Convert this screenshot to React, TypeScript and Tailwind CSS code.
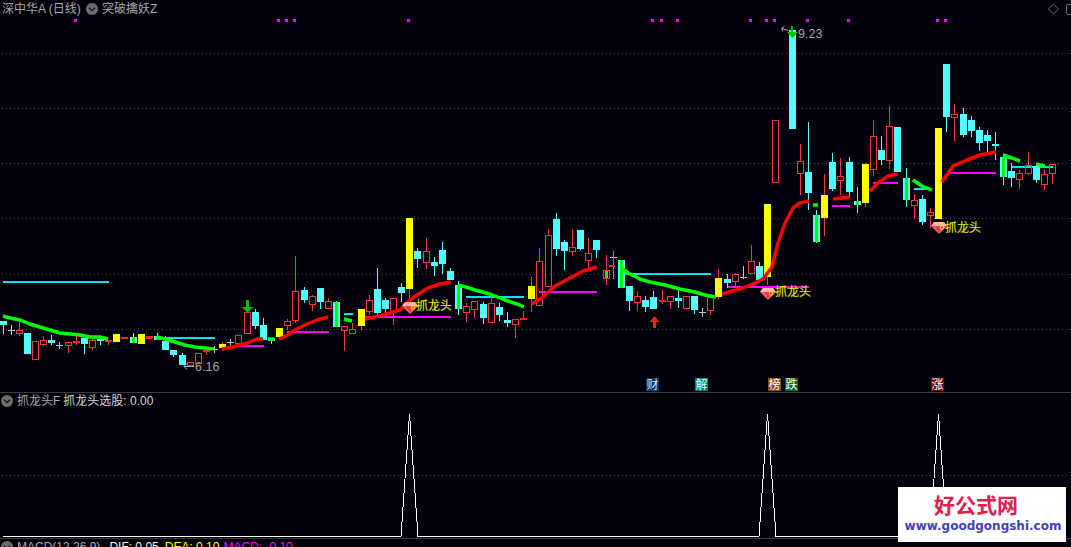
type Kind = 'r' | 'c' | 'y' | 'w' | 'f' | 'cg' | 'rg';
type Candle = [number, number, number, number, number, Kind];

// x, wick top, body top, body bottom, wick bottom, kind
const candles: Candle[] = [
  [3, 321, 321, 325, 334, 'c'], [11, 325, 330, 330, 335, 'w'], [19, 322, 330, 333, 336, 'r'], [27, 333, 333, 354, 354, 'c'],
  [35, 341, 341, 359, 359, 'r'], [43, 336, 340, 344, 346, 'r'], [51, 335, 340, 343, 345, 'c'], [59, 342, 345, 345, 349, 'w'],
  [68, 342, 342, 345, 353, 'r'], [76, 336, 341, 343, 345, 'f'], [84, 338, 338, 344, 354, 'c'], [92, 339, 340, 347, 350, 'r'],
  [100, 339, 339, 341, 345, 'c'], [108, 340, 340, 341, 345, 'f'], [116, 334, 334, 342, 342, 'y'], [124, 337, 337, 339, 339, 'f'],
  [133, 333, 337, 343, 343, 'cg'], [141, 334, 334, 344, 344, 'y'], [149, 336, 336, 339, 339, 'f'], [157, 333, 336, 340, 340, 'cg'],
  [165, 336, 341, 350, 350, 'c'], [173, 350, 350, 355, 357, 'c'], [182, 353, 355, 365, 365, 'c'], [190, 362, 362, 365, 365, 'r'],
  [198, 353, 353, 363, 363, 'r'], [206, 350, 350, 352, 355, 'f'], [214, 346, 349, 349, 353, 'w'], [222, 342, 344, 348, 351, 'y'],
  [230, 339, 342, 342, 347, 'w'], [238, 335, 335, 343, 343, 'r'], [247, 312, 312, 333, 333, 'r'], [255, 309, 312, 326, 329, 'c'],
  [263, 318, 325, 340, 340, 'c'], [271, 338, 338, 341, 344, 'cg'], [279, 328, 328, 337, 337, 'y'], [287, 319, 321, 325, 330, 'r'],
  [295, 256, 291, 320, 323, 'r'], [304, 287, 290, 300, 303, 'c'], [312, 295, 296, 304, 311, 'r'], [320, 288, 288, 302, 309, 'c'],
  [328, 298, 301, 308, 309, 'r'], [336, 301, 302, 327, 327, 'cg'], [344, 326, 326, 330, 351, 'r'], [352, 323, 329, 333, 333, 'r'],
  [361, 309, 309, 326, 330, 'y'], [369, 295, 300, 311, 315, 'r'], [377, 268, 289, 313, 315, 'c'], [385, 298, 300, 309, 313, 'c'],
  [393, 298, 298, 311, 325, 'r'], [401, 283, 287, 293, 302, 'c'], [409, 218, 218, 289, 298, 'y'], [417, 248, 251, 259, 268, 'c'],
  [426, 238, 251, 262, 269, 'r'], [434, 257, 262, 266, 276, 'c'], [442, 242, 250, 264, 274, 'c'], [450, 268, 271, 280, 280, 'c'],
  [458, 281, 285, 309, 315, 'cg'], [466, 303, 306, 312, 322, 'r'], [474, 301, 301, 309, 318, 'r'], [483, 302, 304, 318, 324, 'c'],
  [491, 297, 303, 322, 322, 'r'], [499, 303, 307, 315, 321, 'c'], [507, 312, 320, 323, 327, 'c'], [515, 319, 319, 324, 338, 'r'],
  [523, 311, 318, 320, 320, 'f'], [531, 277, 286, 299, 312, 'y'], [539, 248, 261, 305, 305, 'r'], [548, 229, 235, 286, 287, 'r'],
  [556, 213, 219, 249, 256, 'c'], [564, 240, 242, 251, 270, 'c'], [572, 229, 247, 251, 256, 'r'], [580, 230, 230, 249, 250, 'c'],
  [588, 238, 253, 260, 268, 'r'], [596, 240, 240, 250, 258, 'c'], [606, 255, 270, 278, 285, 'rg'], [621, 260, 260, 288, 288, 'cg'],
  [629, 286, 286, 301, 311, 'c'], [637, 291, 296, 302, 311, 'r'], [645, 296, 300, 307, 312, 'c'], [653, 291, 297, 309, 309, 'c'],
  [662, 290, 300, 302, 304, 'f'], [670, 296, 296, 301, 309, 'r'], [678, 291, 298, 301, 308, 'c'], [686, 296, 296, 308, 310, 'r'],
  [694, 296, 296, 310, 314, 'c'], [702, 308, 312, 312, 317, 'w'], [710, 297, 297, 310, 315, 'r'], [718, 269, 278, 297, 299, 'y'],
  [727, 274, 279, 283, 288, 'c'], [735, 273, 274, 281, 288, 'r'], [743, 266, 277, 277, 279, 'w'], [751, 245, 261, 273, 274, 'r'],
  [759, 262, 266, 280, 280, 'c'], [767, 204, 204, 277, 285, 'y'], [775, 120, 120, 182, 183, 'r'], [792, 30, 30, 129, 129, 'c'],
  [800, 144, 161, 173, 195, 'r'], [808, 122, 172, 193, 210, 'c'], [816, 210, 215, 242, 243, 'cg'], [824, 174, 195, 218, 236, 'y'],
  [832, 153, 162, 189, 191, 'c'], [840, 158, 176, 180, 195, 'r'], [849, 157, 162, 192, 197, 'c'], [857, 187, 201, 205, 213, 'cg'],
  [865, 163, 164, 203, 207, 'y'], [873, 120, 136, 169, 176, 'r'], [881, 136, 150, 160, 165, 'c'], [889, 106, 126, 160, 169, 'r'],
  [897, 127, 127, 172, 172, 'c'], [906, 168, 178, 200, 207, 'cg'], [914, 194, 200, 205, 219, 'r'], [922, 195, 199, 222, 225, 'c'],
  [930, 208, 212, 215, 228, 'r'], [938, 128, 128, 219, 219, 'y'], [946, 64, 64, 117, 132, 'c'], [954, 104, 114, 117, 141, 'r'],
  [963, 108, 114, 135, 137, 'c'], [971, 116, 120, 131, 137, 'c'], [979, 127, 130, 143, 151, 'c'], [987, 130, 135, 141, 152, 'c'],
  [995, 132, 144, 146, 160, 'c'], [1003, 154, 157, 177, 185, 'cg'], [1011, 163, 171, 178, 187, 'c'], [1019, 170, 173, 179, 189, 'r'],
  [1028, 152, 165, 173, 175, 'r'], [1036, 165, 166, 180, 183, 'c'], [1044, 169, 174, 184, 190, 'r'], [1052, 164, 164, 173, 184, 'r'],
];

const greenLines = [
  '3,316 10,318 20,320 30,324 40,327 50,330 60,333 70,334 80,335 90,337 100,337 108,339',
  '157,337 165,339 175,342 185,345 195,347 205,348 214,349',
  '268,339 274,339',
  '344,319 352,321',
  '458,285 466,287 475,290 490,294 505,300 520,305 524,307',
  '621,268 630,274 640,279 650,282 665,285 680,289 695,292 705,295 716,297',
  '813,205 818,205',
  '913,180 922,186 932,190',
  '1003,155 1012,158 1020,161',
  '1036,164 1045,166',
];

const redLines = [
  '222,349 233,347 247,343 257,339 263,339',
  '279,339 288,335 295,330 307,324 317,320 328,317',
  '365,319 383,315 400,310 408,302 417,295 428,288 440,284 451,282',
  '532,304 543,297 555,286 570,278 583,271 597,267',
  '722,294 743,288 753,284 763,279 772,267 778,243 785,223 793,208 800,203 809,201',
  '833,199 850,197',
  '870,191 878,183 888,176 898,174',
  '942,182 953,166 967,160 980,155 996,152',
];

// x1, x2, y
const cyanBars = [[3, 109, 282], [157, 215, 338], [344, 353, 314], [466, 524, 297], [623, 711, 274], [914, 927, 189], [1012, 1053, 167]];
const magentaBars = [[240, 264, 346], [287, 329, 332], [365, 451, 317], [539, 597, 292], [728, 809, 287], [832, 850, 206], [873, 898, 183], [948, 996, 173]];
const topDots = [75, 278, 286, 294, 408, 652, 661, 677, 750, 766, 774, 807, 848, 937, 945];
const gridY = [53, 108, 163, 218, 274, 329];
const tags: [number, string, string, string][] = [
  [646, '财', '#0b2f66', '#bfeaff'],
  [695, '解', '#0a7a78', '#e8ffff'],
  [768, '榜', '#8a4a08', '#ffffff'],
  [785, '跌', '#07690f', '#ffffff'],
  [931, '涨', '#7a0808', '#ffffff'],
];
const peaks = [409.5, 767.5, 938.5];

const font = { fontFamily: '"Liberation Sans","Noto Sans CJK SC",sans-serif' };

function CandleBar({ c }: { c: Candle }) {
  const [x, wt, bt, bb, wb, kind] = c;
  if (kind === 'w') {
    return (
      <g fill="#c4c4c4">
        <rect x={x} y={wt} width={1} height={wb - wt} />
        <rect x={x - 3} y={bt} width={7} height={1} />
      </g>
    );
  }
  if (kind === 'r' || kind === 'rg') {
    return (
      <g>
        <rect x={x} y={wt} width={1} height={bt - wt} fill="#f83838" />
        <rect x={x} y={bb} width={1} height={wb - bb} fill="#f83838" />
        <rect x={x - 2.5} y={bt + 0.5} width={6} height={bb - bt} fill="none" stroke="#f83838" />
        {kind === 'rg' && <rect x={x - 1} y={bt + 1} width={3} height={bb - bt - 1} fill="#00ff00" />}
      </g>
    );
  }
  const fill = kind === 'y' ? '#ffff00' : kind === 'f' ? '#ff2020' : '#54ffff';
  const wick = kind === 'y' ? '#f83838' : kind === 'f' ? '#f83838' : '#54ffff';
  return (
    <g>
      <rect x={x} y={wt} width={1} height={wb - wt} fill={wick} />
      <rect x={x - 3} y={bt} width={7} height={Math.max(bb - bt, 2)} fill={fill} />
      {kind === 'cg' && <rect x={x - 1} y={bt} width={3} height={bb - bt} fill="#00ff00" />}
    </g>
  );
}

function Gem({ x, y }: { x: number; y: number }) {
  return (
    <g transform={`translate(${x} ${y})`}>
      <polygon points="0,4 3,0 13,0 16,4 8,12" fill="#f0606c" />
      <polygon points="3,0 13,0 16,4 0,4" fill="#ffb8a8" />
      <polygon points="4,4 12,4 8,11" fill="#e83848" />
      <circle cx={11} cy={5.5} r={1.8} fill="none" stroke="#ffe020" />
    </g>
  );
}

function Label({ x, y }: { x: number; y: number }) {
  return (
    <text x={x} y={y} fontSize={12} fill="#ffff00" stroke="#a0a000" strokeWidth={0.15}>
      抓龙头
    </text>
  );
}

function DropIcon() {
  return (
    <svg width="12" height="12" viewBox="0 0 12 12" className="shrink-0">
      <circle cx="6" cy="6" r="6" fill="#6c6c6c" />
      <path d="M3 4.8 L6 7.6 L9 4.8" fill="none" stroke="#1a1a1a" strokeWidth="1.4" />
    </svg>
  );
}

function MainChart() {
  return (
    <svg width="1071" height="392" viewBox="0 0 1071 392" className="absolute inset-0" style={font}>
      {gridY.map((y) => (
        <line key={y} x1={2} x2={1071} y1={y + 0.5} y2={y + 0.5} stroke="#484848" strokeDasharray="1 3" />
      ))}
      {topDots.map((x) => (
        <rect key={x} x={x - 1} y={19} width={3} height={3} fill="#ff00ff" />
      ))}

      {cyanBars.map(([a, b, y]) => (
        <rect key={a} x={a} y={y - 1} width={b - a} height={2} fill="#00e4ee" />
      ))}
      {magentaBars.map(([a, b, y]) => (
        <rect key={a} x={a} y={y - 1} width={b - a} height={2} fill="#ff00ff" />
      ))}

      {candles.map((c) => (
        <CandleBar key={c[0]} c={c} />
      ))}

      <rect x={610} y={257} width={7} height={1} fill="#ffdd00" />
      <rect x={613} y={251} width={1} height={28} fill="#e850a0" />
      <rect x={609} y={265} width={6} height={2} fill="#ff2020" />

      {greenLines.map((p) => (
        <polyline key={p} points={p} fill="none" stroke="#00ff00" strokeWidth={3.5} strokeLinejoin="round" />
      ))}
      {redLines.map((p) => (
        <polyline key={p} points={p} fill="none" stroke="#ff0000" strokeWidth={3.5} strokeLinejoin="round" />
      ))}

      {/* signal arrows */}
      <path d="M246 300h3v7h4.500l-6 5.500-6-5.500h4.500z" fill="#00c000" />
      <path d="M791 26h2v6h5l-5.500 6-5.500-6h4z" fill="#00c000" />
      <path d="M654.500 316l5 6h-3.500v6h-3v-6h-3.500z" fill="#f02020" />

      {/* high and low price marks */}
      <path d="M194 366.500h-10m3-3l-3 3 3 3" fill="none" stroke="#b0b0b0" />
      <text x={195} y={371} fontSize={12.500} fill="#a4a4a8">6.16</text>
      <path d="M788 30.500l-6-2m2.500-2l-3 2 1.500 3" fill="none" stroke="#b0b0b0" />
      <text x={798} y={38} fontSize={12.500} fill="#a4a4a8">9.23</text>

      <Gem x={402} y={302} />
      <Label x={416} y={310} />
      <Gem x={760} y={288} />
      <Label x={775} y={296} />
      <Gem x={931} y={222} />
      <Label x={945} y={232} />

      {tags.map(([x, t, bg, fg]) => (
        <g key={t}>
          <rect x={x} y={378} width={13} height={13} fill={bg} />
          <text x={x + 0.500} y={389} fontSize={12} fill={fg}>{t}</text>
        </g>
      ))}

      {/* top right toolbar marks */}
      <path d="M1053.500 4l5 5-5 5-5-5z" fill="none" stroke="#6a6a6a" />
      <rect x={1066.500} y={4.500} width={10} height={10} rx={1.500} fill="none" stroke="#6a6a6a" />
    </svg>
  );
}

function SignalChart() {
  return (
    <svg width="1071" height="145" viewBox="0 393 1071 145" className="absolute inset-0">
      <line x1={2} x2={1071} y1={475.5} y2={475.5} stroke="#484848" strokeDasharray="1 3" />
      <polyline
        points={`3,536.500 401,536.500 ${peaks[0]},414 418,536.500 759,536.500 ${peaks[1]},414 776,536.500 930,536.500 ${peaks[2]},414 947,536.500 1060,536.500`}
        fill="none"
        stroke="#ffffff"
        strokeWidth={1}
        shapeRendering="crispEdges"
      />
    </svg>
  );
}

export default function App() {
  return (
    <div className="relative flex h-[547px] w-[1071px] flex-col overflow-hidden bg-[#01010b] text-[12px] leading-none" style={font}>
      <section className="relative h-[393px] shrink-0 border-b border-[#3a3a3a]">
        <MainChart />
        <header className="relative flex h-[18px] items-center pl-[2px] text-[#a8a8ae]">
          <span className="w-[84px] shrink-0">深中华A (日线)</span>
          <DropIcon />
          <span className="ml-[4px]">突破擒妖Z</span>
        </header>
      </section>

      <section className="relative h-[146px] shrink-0 border-b border-[#3a3a3a]">
        <SignalChart />
        <header className="relative flex h-[16px] items-center pl-[1px]">
          <DropIcon />
          <span className="ml-[4px] text-[#a8a8ae]">抓龙头F</span>
          <span className="ml-[3px] text-[#d4d4d8]">抓龙头选股: 0.00</span>
        </header>
      </section>

      <footer className="flex flex-1 items-start overflow-hidden pl-[1px] pt-[2px]">
        <DropIcon />
        <span className="ml-[4px] text-[#a8a8ae]">MACD(12,26,9)</span>
        <span className="ml-[9px] text-[#f0f0f0]">DIF: 0.05</span>
        <span className="ml-[6px] text-[#ffff00]">DEA: 0.10</span>
        <span className="ml-[4px] text-[#ff00ff]">MACD: -0.10</span>
      </footer>

      <aside className="absolute left-[898px] top-[487px] flex h-[55px] w-[168px] flex-col items-center bg-white">
        <div className="mr-[12px] mt-[6px] text-[21px] font-bold leading-[23px] text-[#e0204c]" style={{ fontFamily: '"Noto Sans CJK SC",sans-serif' }}>
          好公式网
        </div>
        <div className="ml-[2px] mt-[3px] whitespace-nowrap text-[12px] font-bold leading-[14px] text-[#4242b8]" style={{ fontFamily: '"DejaVu Sans",sans-serif' }}>
          www.goodgongshi.com
        </div>
      </aside>
    </div>
  );
}
